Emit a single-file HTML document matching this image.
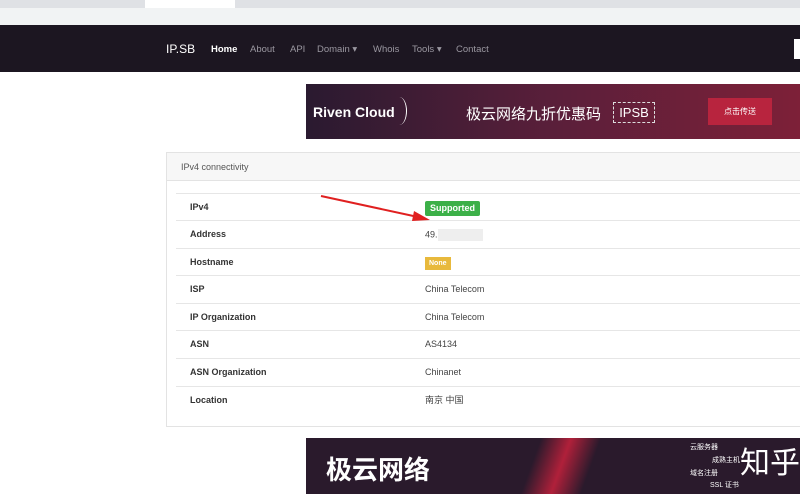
<!DOCTYPE html><html><head><style>
body{margin:0;width:800px;height:500px;overflow:hidden;background:#fff;font-family:"Liberation Sans","Noto Sans CJK SC",sans-serif;position:relative}
.a{position:absolute}
.nav a{position:absolute;top:44px;font-size:9.5px;color:#9a97a0}
.row{position:absolute;left:176px;width:624px;height:27.5px;border-top:1px solid #e6e6e6;font-size:9px;color:#444;line-height:11px}
.row b{position:absolute;left:14px;top:8px;color:#333}
.row span{position:absolute;left:249px;top:8px}
</style></head><body>
<div class="a" style="left:0;top:0;width:800px;height:8px;background:#dfe1e5"></div>
<div class="a" style="left:145px;top:0;width:90px;height:8px;background:#fff"></div>
<div class="a" style="left:0;top:8px;width:800px;height:17px;background:#f1f3f4"></div>
<div class="a" style="left:0;top:25px;width:800px;height:47px;background:#1c1621"></div>
<div class="nav">
<a style="left:166px;top:42px;font-size:12px;color:#fff">IP.SB</a>
<a style="left:211px;color:#fff;font-weight:bold">Home</a>
<a style="left:250px">About</a><a style="left:290px">API</a>
<a style="left:317px">Domain ▾</a><a style="left:373px">Whois</a>
<a style="left:412px">Tools ▾</a><a style="left:456px">Contact</a>
</div>
<div class="a" style="left:794px;top:39px;width:6px;height:20px;background:#fff"></div>
<div class="a" style="left:306px;top:84px;width:494px;height:55px;background:linear-gradient(90deg,#2a1a30,#5a1f3a 50%,#7d2038)"></div>
<div class="a" style="left:313px;top:104px;color:#fff;font-size:14px;font-weight:bold">Riven Cloud</div>
<div class="a" style="left:392px;top:97px;width:14px;height:28px;border-right:1.5px solid #fff;border-radius:50%"></div>
<div class="a" style="left:466px;top:103px;color:#fff;font-size:15px">极云网络九折优惠码</div>
<div class="a" style="left:613px;top:102px;width:40px;height:19px;border:1px dashed #ddd;color:#fff;font-size:13px;text-align:center;line-height:19px">IPSB</div>
<div class="a" style="left:708px;top:98px;width:64px;height:27px;background:#b8243e;color:#fff;font-size:8px;text-align:center;line-height:27px">点击传送</div>
<div class="a" style="left:166px;top:152px;width:640px;height:273px;border:1px solid #e3e3e3"></div>
<div class="a" style="left:167px;top:153px;width:640px;height:27px;background:#f7f7f7;border-bottom:1px solid #e3e3e3;font-size:9px;color:#555"><span style="position:absolute;left:14px;top:9px">IPv4 connectivity</span></div>
<div class="row" style="top:193px"><b>IPv4</b><span style="top:7px;background:#3cb048;color:#fff;font-weight:bold;padding:2px 5px;border-radius:2px">Supported</span></div>
<div class="row" style="top:220px"><b>Address</b><span>49.<i style="display:inline-block;width:45px;height:12px;background:#eee;vertical-align:middle"></i></span></div>
<div class="row" style="top:248px"><b>Hostname</b><span style="top:8px;background:#e8b93c;color:#fff;font-size:7px;font-weight:bold;padding:1px 4px">None</span></div>
<div class="row" style="top:275px"><b>ISP</b><span>China Telecom</span></div>
<div class="row" style="top:303px"><b>IP Organization</b><span>China Telecom</span></div>
<div class="row" style="top:330px"><b>ASN</b><span>AS4134</span></div>
<div class="row" style="top:358px"><b>ASN Organization</b><span>Chinanet</span></div>
<div class="row" style="top:386px"><b>Location</b><span style="top:8px;line-height:11px">南京 中国</span></div>
<svg class="a" style="left:318px;top:192px" width="115" height="32"><line x1="3" y1="4" x2="100" y2="25" stroke="#e02020" stroke-width="2"/><polygon points="112,28 96,19 94,29" fill="#e02020"/></svg>
<div class="a" style="left:306px;top:438px;width:494px;height:56px;background:#2a1a2c;overflow:hidden">
<div class="a" style="left:190px;top:0;width:130px;height:56px;background:linear-gradient(110deg,transparent 30%,#b0203a 50%,transparent 70%)"></div>
<div class="a" style="left:20px;top:12px;color:#fff;font-size:26px;font-weight:bold">极云网络</div>
<div class="a" style="left:384px;top:4px;color:#fff;font-size:7px">云服务器</div>
<div class="a" style="left:406px;top:17px;color:#fff;font-size:7px">成熟主机</div>
<div class="a" style="left:384px;top:30px;color:#fff;font-size:7px">域名注册</div>
<div class="a" style="left:404px;top:42px;color:#fff;font-size:7px">SSL 证书</div>
<div class="a" style="left:434px;top:0;color:#fff;font-size:30px">知乎</div>
</div>
</body></html>
